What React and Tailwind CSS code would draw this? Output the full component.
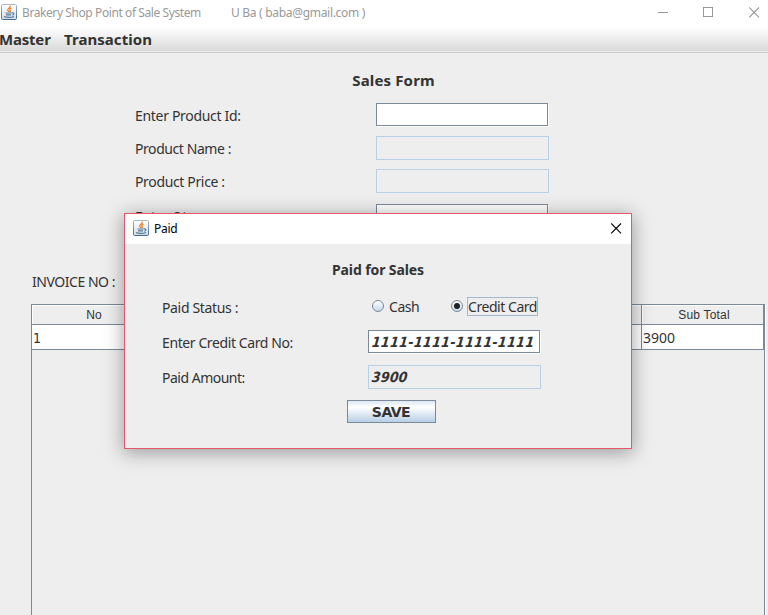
const ui = "font-['Noto_Sans','Open_Sans',sans-serif]";
const wide = "font-['DejaVu_Sans_Condensed','DejaVu_Sans',sans-serif]";

function JavaIcon() {
  return (
    <svg width="16" height="16" viewBox="0 0 16 16" className="block shrink-0">
      <defs>
        <linearGradient id="tile" x1="0" y1="0" x2="0" y2="1">
          <stop offset="0" stopColor="#ffffff" />
          <stop offset="1" stopColor="#d3dde5" />
        </linearGradient>
        <linearGradient id="rim" x1="0" y1="0" x2="0" y2="1">
          <stop offset="0" stopColor="#a9b8c6" />
          <stop offset="1" stopColor="#44698a" />
        </linearGradient>
      </defs>
      <rect x="0.5" y="0.5" width="15" height="15" rx="1.2" fill="url(#tile)" stroke="url(#rim)" />
      <path d="M9.4 1.8c.6 1.8-3 2.400-2.700 4.200.1.8.9 1.200 1.300 2M10.600 4c-1.700.6-2.300 1.300-1.500 2.300.5.7.1 1.200-.5 1.600" fill="none" stroke="#e8822a" strokeWidth="1.300" />
      <path d="M4.500 9h6.300M5 10.900h5M11 8.900c2.500-.5 2.400 1.700.2 2.400M3 12.500c2.200 1.200 7.800 1.100 10-.1" fill="none" stroke="#54799a" strokeWidth="1.100" />
    </svg>
  );
}

function CloseGlyph() {
  return (
    <svg width="11" height="11" viewBox="0 0 11 11" className="block" stroke="currentColor" fill="none">
      <path d="M.2.5l9.800 9.800M10 .5l-9.800 9.800" strokeWidth="1.100" />
    </svg>
  );
}

/* Editable field with the etched white edge of the Metal look and feel. */
function Field({ children }) {
  return (
    <div className="h-[23px] w-[172px] border border-[#7a8a99] bg-white shadow-[1px_1px_0_#fff]">{children}</div>
  );
}

function LockedField({ children }) {
  return <div className="h-6 w-[173px] border border-[#b8cfe5]">{children}</div>;
}

function Cell({ className, children }) {
  return <div className={`border-r border-[#7a8a99] ${className}`}>{children}</div>;
}

function TitleBar() {
  return (
    <header className="flex h-[27px] items-start bg-white pl-[1px] text-[12px] leading-[18px] text-[#999]">
      <div className="mt-1">
        <JavaIcon />
      </div>
      <span className="ml-[5px] mt-1 w-[209px] tracking-[-0.41px]">Brakery Shop Point of Sale System</span>
      <span className="mt-1 tracking-[-0.3px]">U Ba ( baba@gmail.com )</span>
      <div className="ml-auto flex pr-[8px] pt-[7px]">
        <div className="mr-[35px] mt-[5px] h-px w-[10px] bg-[#999]" />
        <div className="mr-[36px] h-[10px] w-[10px] border border-[#999]" />
        <CloseGlyph />
      </div>
    </header>
  );
}

function Dialog() {
  return (
    <section className="absolute left-[124px] top-[213px] h-[236px] w-[508px] border border-[#e4586a] bg-[#eee] shadow-[0_3px_18px_1px_rgba(0,0,0,0.34)]">
      <header className="flex h-[30px] items-start bg-white pl-2 pr-[9px] text-[12px] leading-[18px] text-black">
        <div className="mt-[6px]">
          <JavaIcon />
        </div>
        <span className="ml-[5px] mt-[6px] tracking-[-0.3px]">Paid</span>
        <div className="ml-auto mt-[9px]">
          <CloseGlyph />
        </div>
      </header>
      <h2 className="mt-4 text-center text-[14px] font-bold leading-5 tracking-[-0.1px]">Paid for Sales</h2>

      <div className="mt-[18px] flex h-[35px] pl-[37px]">
        <span className="w-[210px] leading-5 tracking-[-0.35px]">Paid Status :</span>
        <div className="mt-[2px] h-3 w-3 rounded-full border border-[#7a8a99] bg-linear-to-b from-white to-[#c4d8ea]" />
        <span className="-mt-px ml-[5px] w-[62px] leading-5 tracking-[-0.45px]">Cash</span>
        <div className="mt-[2px] flex h-3 w-3 items-center justify-center rounded-full border border-[#7a8a99] bg-linear-to-b from-white to-[#c4d8ea]">
          <div className="h-[6px] w-[6px] rounded-full bg-[#222]" />
        </div>
        <span className="-mt-px ml-[4px] h-[19px] w-[71px] whitespace-nowrap border border-[#a3b8cc] leading-[18px] tracking-[-0.45px]">
          Credit Card
        </span>
      </div>
      <div className="flex h-[35px] pl-[37px]">
        <span className="w-[206px] leading-5 tracking-[-0.4px]">Enter Credit Card No:</span>
        <div className="-mt-[3px]">
          <Field>
            <span className={`block whitespace-nowrap pl-[3px] -skew-x-6 text-[14px] font-bold italic leading-[22px] tracking-[0.35px] ${wide}`}>
              1111-1111-1111-1111
            </span>
          </Field>
        </div>
      </div>
      <div className="flex h-[35px] pl-[37px]">
        <span className="w-[206px] leading-5 tracking-[-0.5px]">Paid Amount:</span>
        <div className="-mt-[3px]">
          <LockedField>
            <span className={`block pl-[3px] -skew-x-6 text-[14px] font-bold italic leading-[22px] tracking-[0.2px] ${wide}`}>3900</span>
          </LockedField>
        </div>
      </div>
      <button className="ml-[222px] block h-[23px] w-[89px] -mt-[3px] border border-[#7a8a99] bg-linear-to-b from-[#dde8f3] via-white via-30% to-[#b8cfe5] pr-px pt-px font-['DejaVu_Sans',sans-serif] text-[14px] font-bold leading-[20px] tracking-[-0.5px]">
        SAVE
      </button>
    </section>
  );
}

export default function App() {
  return (
    <div className={`relative flex h-[615px] w-[768px] flex-col overflow-hidden bg-[#eee] text-[14px] text-[#333] *:shrink-0 ${ui}`}>
      <TitleBar />
      <nav className="flex h-[24px] bg-linear-to-b from-white to-[#dadada] text-[15px] font-bold leading-[25px]">
        <span className="-ml-px w-[65px] tracking-[-0.2px]">Master</span>
        <span className="tracking-[0.05px]">Transaction</span>
      </nav>
      <div className="mt-px h-px bg-[#ccc]" />

      <h1 className="mt-[17px] pl-[19px] text-center text-[15px] font-bold leading-5 tracking-[0.15px]">Sales Form</h1>

      <div className="mt-[13px] flex h-[33px] pl-[135px]">
        <span className="w-[241px] leading-[26px] tracking-[-0.31px]">Enter Product Id:</span>
        <Field />
      </div>
      <div className="flex h-[33px] pl-[135px]">
        <span className="w-[241px] leading-[26px] tracking-[-0.43px]">Product Name :</span>
        <LockedField />
      </div>
      <div className="flex h-[35px] pl-[135px]">
        <span className="w-[241px] leading-[26px] tracking-[-0.35px]">Product Price :</span>
        <LockedField />
      </div>
      <div className="flex h-[33px] pl-[135px]">
        <span className="w-[241px] leading-[26px] tracking-[-0.35px]">Enter Qty :</span>
        <Field />
      </div>

      <div className="mt-[35px] pl-8 leading-5 tracking-[-0.46px]">INVOICE NO :</div>

      <div className="ml-[31px] mt-3 h-[330px] w-[734px] border border-[#7a8a99] shadow-[1px_1px_0_#fff]">
        <div className="flex h-5 border-b border-r border-[#7a8a99] font-['Liberation_Sans',sans-serif] text-[12px] leading-[21px] tracking-[0.2px] shadow-[inset_1px_1px_0_#fff]">
          <Cell className="w-[123px] pl-[2px] text-center">No</Cell>
          <Cell className="w-[487px]" />
          <div className="flex-1 pl-[3px] text-center shadow-[inset_1px_1px_0_#fff]">Sub Total</div>
        </div>
        <div className="flex h-[25px] border-b border-r border-[#7a8a99] bg-white leading-[25px]">
          <Cell className={`w-[123px] pl-px leading-[26px] ${wide}`}>1</Cell>
          <Cell className="w-[487px]" />
          <div className="flex-1 pl-px">3900</div>
        </div>
      </div>
      <Dialog />
    </div>
  );
}
